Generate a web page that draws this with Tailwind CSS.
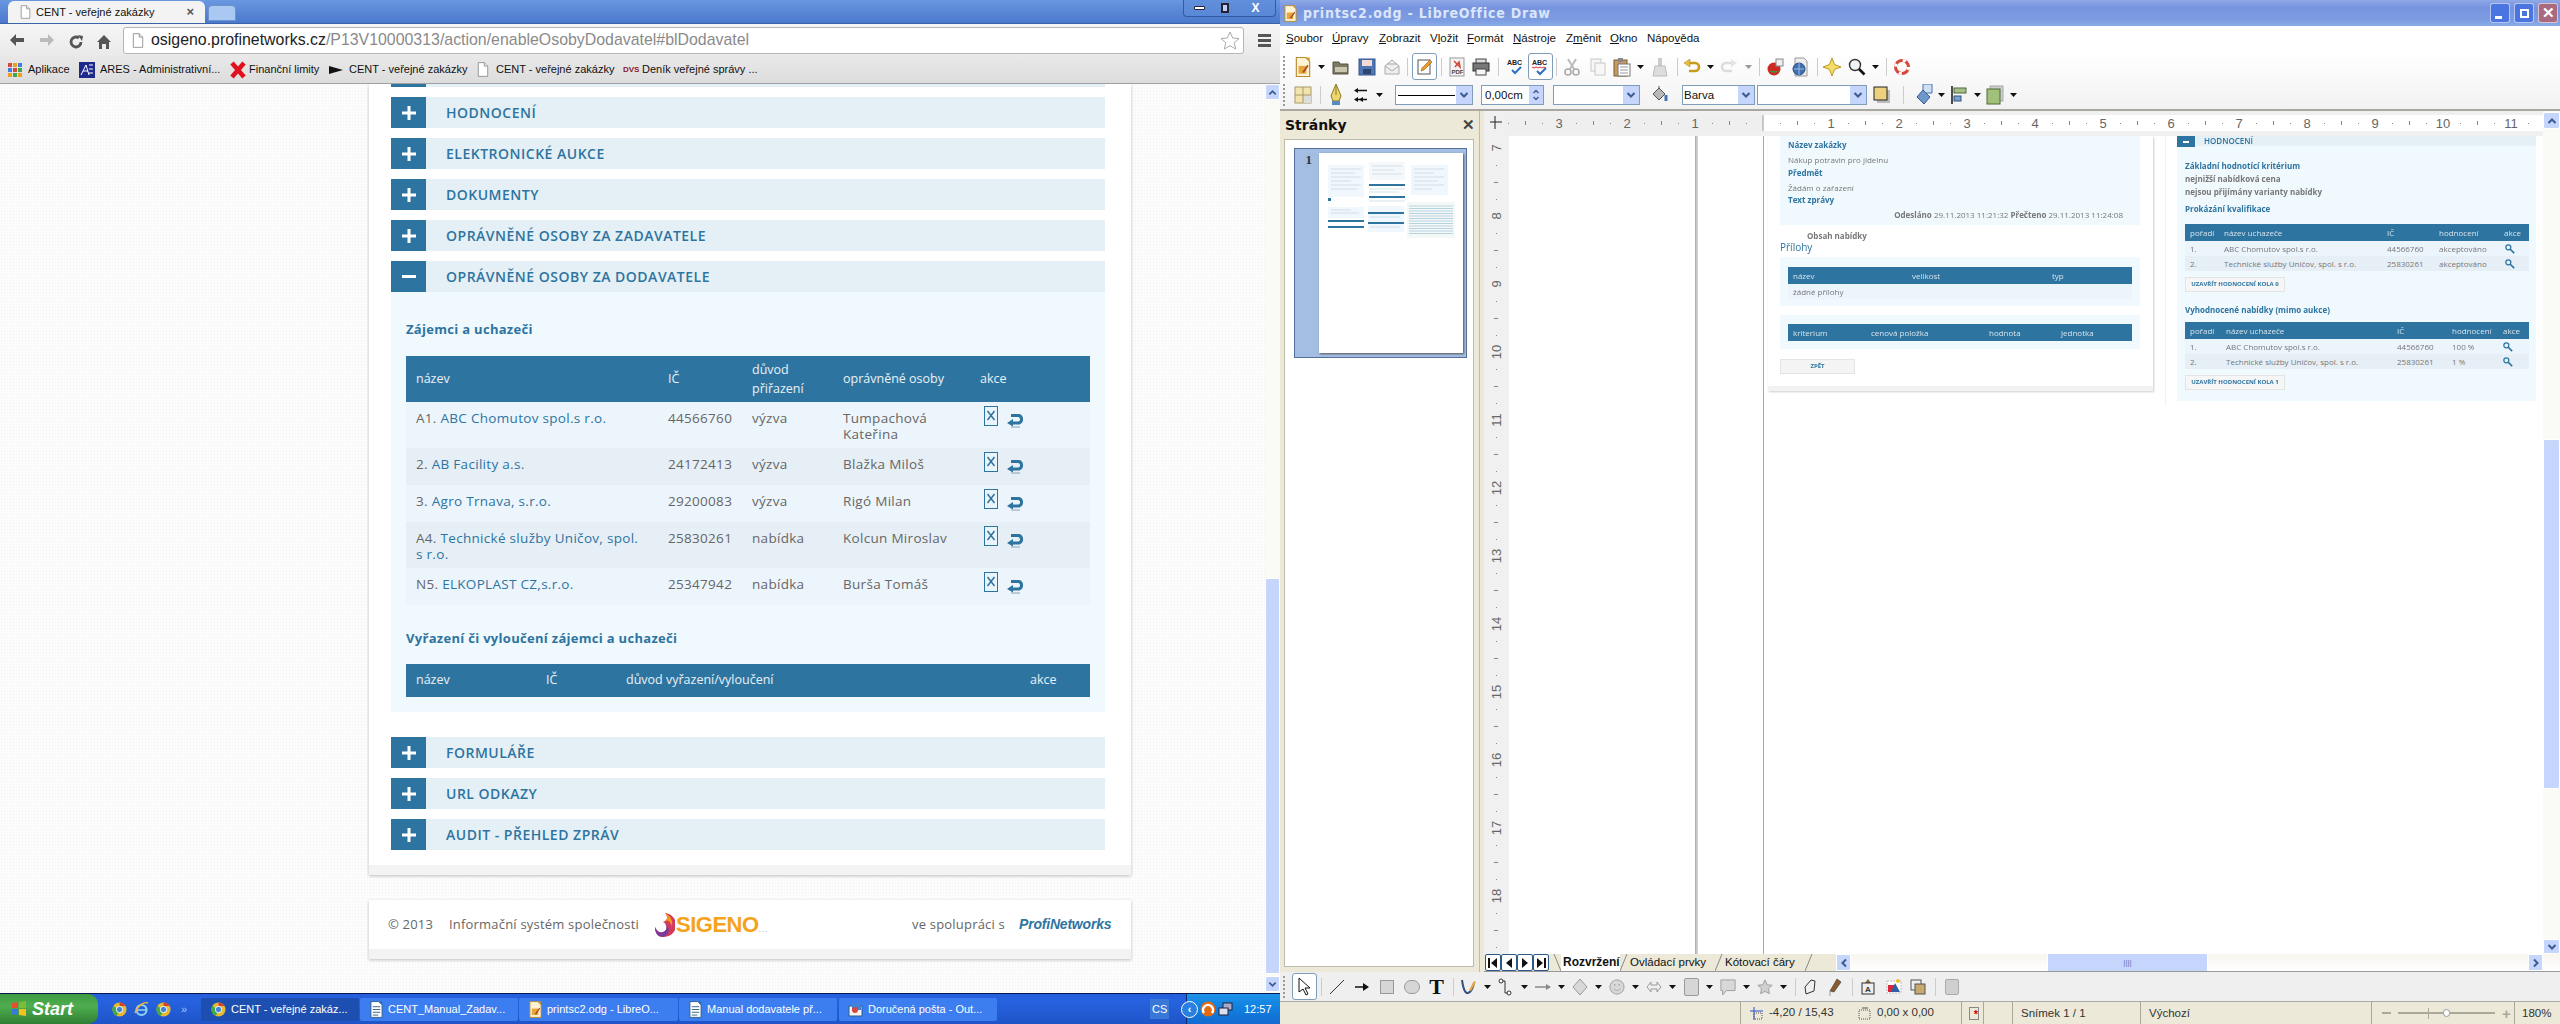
<!DOCTYPE html>
<html lang="cs">
<head>
  <meta charset="UTF-8" />
  <title>CENT - veřejné zakázky</title>
  <script src="https://cdn.jsdelivr.net/npm/@tailwindcss/browser@4"></script>
</head>
<body class="w-[2560px] h-[1024px] overflow-hidden flex font-['Liberation_Sans',sans-serif] text-[#111]">

  <!-- icon set -->
  <svg class="absolute w-0 h-0">
    <symbol id="plus" viewBox="0 0 14 14"><path d="M5.5 0h3v5.5H14v3H8.500V14h-3V8.500H0v-3h5.500z" fill="#fff"/></symbol>
    <symbol id="cross" viewBox="0 0 14 20"><rect x=".5" y=".5" width="13" height="19" fill="#eaf4fb" stroke="#2e74a0"/><path d="M3.500 5l7 9M10.500 5l-7 9" stroke="#2e74a0" stroke-width="1.500"/></symbol>
    <symbol id="back" viewBox="0 0 18 14"><path d="M5 1.500h8a4 4 0 0 1 0 7.500H6" fill="none" stroke="#2e74a0" stroke-width="3"/><path d="M7 5L1 9l6 3.500z" fill="#2e74a0"/><path d="M5 13h9" stroke="#a9bccb" stroke-width="1.500"/></symbol>
    <symbol id="doc" viewBox="0 0 14 17"><path d="M1.500.500h7l4 4v12h-11z" fill="#fff" stroke="#8a8a8a"/><path d="M8.500.500v4h4" fill="#eee" stroke="#8a8a8a"/></symbol>
    <symbol id="chrome" viewBox="0 0 16 16"><circle cx="8" cy="8" r="7.500" fill="#e8b92e"/><path d="M8 .5a7.500 7.500 0 0 1 6.500 3.750H8z" fill="#d9402c"/><path d="M1.500 4.250A7.500 7.500 0 0 0 5 15l3-6z" fill="#3da94a"/><circle cx="8" cy="8" r="3.400" fill="#3f82d8" stroke="#fff"/></symbol>
    <symbol id="ldoc" viewBox="0 0 14 18"><path d="M1 .5h8.500l3.500 3.500v13.500H1z" fill="#fff" stroke="#2d5f85"/><path d="M3 6h8M3 9h8M3 12h8M3 15h6" stroke="#2d5f85"/><path d="M9.500.5h3.500V4z" fill="#1d6fa8"/></symbol>
    <symbol id="lodraw" viewBox="0 0 14 18"><path d="M1 .5h8.500l3.500 3.500v13.500H1z" fill="#fff3d6" stroke="#b88a2a"/><path d="M3 8h7v7H3z" fill="#e5a63c"/><path d="M6 14l5-7 1 1-4 6z" fill="#b0441e"/><path d="M9.500.5h3.500V4z" fill="#d59a22"/></symbol>
    <symbol id="arrdown" viewBox="0 0 7 4"><path d="M0 0h7L3.500 4z" fill="#111"/></symbol>
    <symbol id="arrgray" viewBox="0 0 7 4"><path d="M0 0h7L3.500 4z" fill="#999"/></symbol>
    <symbol id="chev" viewBox="0 0 10 10"><path d="M1.500 3L5 6.500 8.500 3" fill="none" stroke="#3c5a93" stroke-width="2"/></symbol>
    <symbol id="open" viewBox="0 0 18 18"><path d="M1 4h6l1 2h8v10H1z" fill="#7d7a64" stroke="#55533f"/><path d="M3 9h12v5H3z" fill="#c9c6ae"/></symbol>
    <symbol id="save" viewBox="0 0 18 18"><rect x="1" y="1" width="16" height="16" fill="#4f77b5" stroke="#34578e"/><rect x="4" y="2" width="10" height="6" fill="#f4dbd6"/><rect x="5" y="11" width="8" height="5" fill="#2b4770"/></symbol>
    <symbol id="mail" viewBox="0 0 18 18"><path d="M2 8l7-6 7 6v8H2z" fill="#eee" stroke="#aaa"/><path d="M2 8l7 5 7-5M4 6h10" fill="none" stroke="#aaa"/></symbol>
    <symbol id="edit" viewBox="0 0 18 18"><rect x="2" y="2" width="12" height="14" fill="#fff" stroke="#555"/><path d="M5 13l1-3 8-8 2 2-8 8z" fill="#e89a2c" stroke="#a15b10" stroke-width=".6"/></symbol>
    <symbol id="print" viewBox="0 0 18 18"><rect x="4" y="1" width="10" height="5" fill="#ddd" stroke="#444"/><rect x="1" y="5" width="16" height="8" fill="#777" stroke="#333"/><rect x="4" y="11" width="10" height="6" fill="#f5f5f5" stroke="#444"/></symbol>
    <symbol id="cut" viewBox="0 0 18 18"><path d="M5 1l6 10M13 1L7 11" stroke="#bbb" stroke-width="2"/><circle cx="5" cy="14" r="3" fill="none" stroke="#aaa" stroke-width="1.600"/><circle cx="13" cy="14" r="3" fill="none" stroke="#aaa" stroke-width="1.600"/></symbol>
    <symbol id="copy" viewBox="0 0 18 18"><rect x="2" y="1" width="10" height="12" fill="#f7f7f7" stroke="#c8c8c8"/><rect x="6" y="5" width="10" height="12" fill="#f7f7f7" stroke="#c8c8c8"/></symbol>
    <symbol id="paste" viewBox="0 0 18 20"><rect x="1" y="3" width="13" height="16" fill="#c79a62" stroke="#7e5a2c"/><rect x="5" y="1" width="5" height="4" fill="#888"/><rect x="5" y="7" width="12" height="12" fill="#fff" stroke="#777"/><path d="M7 10h8M7 13h8M7 16h8" stroke="#999"/></symbol>
    <symbol id="brush" viewBox="0 0 18 20"><rect x="7" y="1" width="4" height="8" fill="#ccc"/><path d="M4 9h10l2 10H2z" fill="#ddd" stroke="#bbb"/></symbol>
    <symbol id="undo" viewBox="0 0 18 16"><path d="M6 4h6a4 4 0 0 1 0 8H6" fill="none" stroke="#c99a1b" stroke-width="2.600"/><path d="M7 0L1 4l6 4z" fill="#e7bf3a" stroke="#a77f10" stroke-width=".5"/></symbol>
    <symbol id="redo" viewBox="0 0 18 16"><path d="M12 4H6a4 4 0 0 0 0 8h6" fill="none" stroke="#ddd" stroke-width="2.600"/><path d="M11 0l6 4-6 4z" fill="#e4e4e4"/></symbol>
    <symbol id="gallery" viewBox="0 0 18 18"><circle cx="8" cy="11" r="6.500" fill="#cc2a22"/><path d="M3 13a6 4 0 0 0 10 0z" fill="#3c9a3c"/><rect x="10" y="1" width="7" height="7" fill="#eee" stroke="#888"/></symbol>
    <symbol id="nav" viewBox="0 0 18 20"><path d="M4 1h9l3 3v15H4z" fill="#eee" stroke="#999"/><circle cx="8" cy="12" r="6" fill="#3f6fae" stroke="#234a80"/><path d="M3 12h10M8 6v12" stroke="#9cc0e8"/></symbol>
    <symbol id="spark" viewBox="0 0 18 18"><path d="M9 0l2.500 6.500L18 9l-6.500 2.500L9 18l-2.500-6.500L0 9l6.500-2.500z" fill="#f5dd6a" stroke="#b79a25"/></symbol>
    <symbol id="lens" viewBox="0 0 18 18"><circle cx="7" cy="7" r="5.500" fill="#eef3f6" stroke="#333" stroke-width="1.400"/><path d="M11 11l5.500 5.500" stroke="#111" stroke-width="2.600"/></symbol>
    <symbol id="help" viewBox="0 0 18 18"><circle cx="9" cy="9" r="6.500" fill="none" stroke="#d9463a" stroke-width="3"/><circle cx="9" cy="9" r="6.500" fill="none" stroke="#fff" stroke-width="3" stroke-dasharray="3 7.200"/></symbol>
    <symbol id="grid4" viewBox="0 0 18 18"><rect x="1" y="1" width="16" height="16" fill="#f3e4ae" stroke="#a89868"/><rect x="9" y="9" width="8" height="8" fill="#ddd"/><path d="M9 1v16M1 9h16" stroke="#a89868"/></symbol>
    <symbol id="pen" viewBox="0 0 14 22"><path d="M7 0l5 12-2 5H4l-2-5z" fill="#ecd56c" stroke="#8c7a20"/><path d="M7 2v9" stroke="#8c7a20"/><rect x="3" y="17" width="8" height="4" fill="#5b8ac0"/></symbol>
    <symbol id="arrows" viewBox="0 0 14 16"><path d="M14 3.500H4M14 12.500H4" stroke="#111" stroke-width="1.400"/><path d="M5 1L1 3.500 5 6zM5 10l-4 2.500L5 15zM10 10l-4 2.500 4 2.500z" fill="#111"/></symbol>
    <symbol id="bucket" viewBox="0 0 18 20"><path d="M2 9l6-6 6 6-6 6z" fill="#b8b8b8" stroke="#555"/><path d="M8 3V1" stroke="#555"/><path d="M15 10v6" stroke="#4472b5" stroke-width="3"/></symbol>
    <symbol id="shadow" viewBox="0 0 18 18"><rect x="4" y="4" width="13" height="13" fill="#bbb"/><rect x="1" y="1" width="13" height="13" fill="#eed17e" stroke="#222"/></symbol>
    <symbol id="object" viewBox="0 0 18 22"><path d="M8 0h9v9h-9z" fill="#cfe0f5" stroke="#4472b5"/><path d="M8 6l7 7-6 7-7-7z" fill="#6e97cc" stroke="#345c93"/></symbol>
    <symbol id="align" viewBox="0 0 16 18"><path d="M1 0v18" stroke="#222" stroke-width="1.600"/><rect x="3" y="2" width="12" height="5" fill="#a7c08a" stroke="#4c6a34"/><rect x="3" y="10" width="7" height="5" fill="#7aa0cc" stroke="#2f557f"/></symbol>
    <symbol id="arrange" viewBox="0 0 18 20"><rect x="4" y="1" width="13" height="15" fill="#ccc" stroke="#aaa"/><rect x="1" y="4" width="13" height="15" fill="#a1c07a" stroke="#4c6a34"/></symbol>
    <symbol id="cursor" viewBox="0 0 14 20"><path d="M1 1v14l4-3 3 6 2-1-3-6h5z" fill="#fff" stroke="#111"/></symbol>
    <symbol id="smiley" viewBox="0 0 18 20"><circle cx="9" cy="10" r="8" fill="#d8d8d8" stroke="#9a9a9a"/><path d="M5 12q4 4 8 0" fill="none" stroke="#aaa"/><circle cx="6.500" cy="7.500" r="1" fill="#aaa"/><circle cx="11.500" cy="7.500" r="1" fill="#aaa"/></symbol>
    <symbol id="callout" viewBox="0 0 18 20"><path d="M1 2h16v12H7l-4 5v-5H1z" fill="#d8d8d8" stroke="#9a9a9a"/></symbol>
    <symbol id="star" viewBox="0 0 18 18"><path d="M9 1l2.500 5.500 5.500.5-4 4 1 5.500L9 14l-5 2.500 1-5.500-4-4 5.500-.5z" fill="#d0d0d0" stroke="#9a9a9a"/></symbol>
    <symbol id="mag" viewBox="0 0 12 12"><circle cx="4" cy="4" r="3" fill="none" stroke="#2e74a0" stroke-width="1.500"/><path d="M6 6l5 5" stroke="#2e74a0" stroke-width="2"/></symbol>
    <symbol id="tabcut" viewBox="0 0 8 17"><path d="M0 17L7 0" stroke="#888" fill="none"/></symbol>
  </svg>

  <!-- Chrome window -->
  <div class="w-[1280px] h-full flex flex-col">
    <!-- tabs -->
    <div class="h-[24px] flex items-end pl-[8px] relative bg-[linear-gradient(#6a97e0,#4a78cc)] border-b border-[#3a63a8]">
      <div class="w-[197px] h-[22px] bg-[#f3f3f3] rounded-t-[6px] flex items-center pl-[12px] text-[11px] gap-[5px] whitespace-nowrap">
        <svg class="w-[11px] h-[14px]"><use href="#doc"/></svg>
        <span class="flex-1">CENT - veřejné zakázky</span>
        <span class="pr-[11px] font-bold text-[13px] text-[#555]">×</span>
      </div>
      <div class="w-[28px] h-[16px] ml-[3px] mb-[2px] bg-[#a9c8f2] rounded-t-[4px] border border-[#6f93cc]"></div>
      <div class="absolute right-[4px] top-0 w-[93px] h-[17px] flex border border-t-0 border-[#2f5ca8] rounded-b-[4px] bg-[#5d8ad8]/60">
        <div class="w-[30px] flex items-center justify-center"><div class="w-[11px] h-[4px] border border-[#223] bg-white rounded-[1px]"></div></div>
        <div class="w-[22px] flex items-center justify-center"><div class="w-[8px] h-[10px] border-[2px] border-[#223] bg-white/60"></div></div>
        <div class="flex-1 flex items-center justify-center text-[12px] font-bold text-white">X</div>
      </div>
    </div>
    <!-- address bar -->
    <div class="h-[32px] flex items-center bg-[linear-gradient(#f6f6f6,#e9e9e9)] text-[#555]">
      <div class="w-[123px] flex items-center pl-[9px] gap-[14px]">
        <svg class="w-[16px] h-[14px]" viewBox="0 0 16 14"><path d="M7 1L1 7l6 6V9h8V5H7z" fill="#555"/></svg>
        <svg class="w-[16px] h-[14px]" viewBox="0 0 16 14"><path d="M9 1l6 6-6 6V9H1V5h8z" fill="#bbb"/></svg>
      </div>
      <div class="absolute left-[68px] top-[34px] flex gap-[12px]">
        <svg class="w-[16px] h-[16px]" viewBox="0 0 16 16"><path d="M13 8a5 5 0 1 1-2-4" fill="none" stroke="#555" stroke-width="2.800"/><path d="M10 1l5 1-1 5z" fill="#555"/></svg>
        <svg class="w-[16px] h-[16px]" viewBox="0 0 16 16"><path d="M8 1l7 7h-2v7h-3v-5H6v5H3V8H1z" fill="#555"/></svg>
      </div>
      <div class="w-[1121px] h-[27px] bg-white border border-[#b5b5b5] rounded-[3px] flex items-center pl-[8px] text-[15.9px] text-[#8a8a8a] relative">
        <svg class="w-[12px] h-[15px] mr-[7px]"><use href="#doc"/></svg>
        <span class="text-[#222]">osigeno.profinetworks.cz</span><span>/P13V10000313/action/enableOsobyDodavatel#blDodavatel</span>
        <svg class="absolute right-[3px] top-[3px] w-[20px] h-[20px]" viewBox="0 0 20 20"><path d="M10 1l2.700 6 6.300.6-4.800 4.200 1.500 6.200L10 14.700 4.300 18l1.500-6.200L1 7.600 7.300 7z" fill="#fff" stroke="#aaa"/></svg>
      </div>
      <div class="w-[36px] flex flex-col items-center gap-[2px] pl-[4px]">
        <div class="w-[13px] h-[3px] bg-[#555]"></div><div class="w-[13px] h-[3px] bg-[#555]"></div><div class="w-[13px] h-[3px] bg-[#555]"></div>
      </div>
    </div>
    <!-- bookmarks -->
    <div class="h-[28px] flex items-center bg-[linear-gradient(#e9e9e9,#dcdcdc)] border-b border-[#a0a0a0] text-[11px] pl-[8px] whitespace-nowrap">
      <div class="w-[14px] h-[14px] grid grid-cols-3 gap-[1px] mr-[6px]">
        <i class="bg-[#d9463a]"></i><i class="bg-[#e8a020]"></i><i class="bg-[#3f7fe0]"></i><i class="bg-[#3f7fe0]"></i><i class="bg-[#d9463a]"></i><i class="bg-[#3da94a]"></i><i class="bg-[#e8a020]"></i><i class="bg-[#3da94a]"></i><i class="bg-[#e8a020]"></i>
      </div>
      <span class="w-[51px]">Aplikace</span>
      <svg class="w-[16px] h-[16px] mr-[5px]" viewBox="0 0 16 16"><rect width="16" height="16" fill="#1d2a8c"/><path d="M2 13L7 3l3 10M4 9h5M10 3h4M10 7h4M10 11h4" fill="none" stroke="#fff"/></svg>
      <span class="w-[130px]">ARES - Administrativní...</span>
      <svg class="w-[16px] h-[18px] mr-[3px]" viewBox="0 0 16 18"><path d="M2 2l12 14M14 2L2 16" stroke="#e0101c" stroke-width="4.500"/></svg>
      <span class="w-[66px] mr-[14px]">Finanční limity</span>
      <svg class="w-[14px] h-[8px] mr-[6px]" viewBox="0 0 14 8"><path d="M0 0l14 4-14 4z" fill="#111"/></svg>
      <span class="w-[128px]">CENT - veřejné zakázky</span>
      <svg class="w-[12px] h-[15px] mr-[7px]"><use href="#doc"/></svg>
      <span class="w-[127px]">CENT - veřejné zakázky</span>
      <span class="text-[8px] font-bold text-[#8b1a2a] w-[19px]">DVS</span>
      <span>Deník veřejné správy ...</span>
    </div>

    <!-- page -->
    <div class="h-[909px] flex bg-[#fcfcfc] bg-[radial-gradient(#f1f1f1_1px,transparent_1px)] bg-[length:3px_3px] overflow-hidden font-['Open_Sans',sans-serif]">
      <div class="w-[1265px] pl-[369px]">
        <div class="w-[762px] bg-white shadow-[0_1px_3px_rgba(0,0,0,0.25)]">
          <div class="ml-[22px] w-[714px] flex flex-col">
            <div class="h-[3px] bg-[#e5f0f6] border-l-[35px] border-[#2e74a0]"></div>
            <div class="mt-[10px] h-[31px] bg-[#e5f0f6] flex items-center text-[14px] font-semibold text-[#2e74a0] tracking-[0.5px]"><span class="w-[35px] h-full bg-[#2e74a0] flex items-center justify-center"><svg class="w-[14px] h-[14px]"><use href="#plus"/></svg></span><span class="pl-[20px]">HODNOCENÍ</span></div>
            <div class="mt-[10px] h-[31px] bg-[#e5f0f6] flex items-center text-[14px] font-semibold text-[#2e74a0] tracking-[0.5px]"><span class="w-[35px] h-full bg-[#2e74a0] flex items-center justify-center"><svg class="w-[14px] h-[14px]"><use href="#plus"/></svg></span><span class="pl-[20px]">ELEKTRONICKÉ AUKCE</span></div>
            <div class="mt-[10px] h-[31px] bg-[#e5f0f6] flex items-center text-[14px] font-semibold text-[#2e74a0] tracking-[0.5px]"><span class="w-[35px] h-full bg-[#2e74a0] flex items-center justify-center"><svg class="w-[14px] h-[14px]"><use href="#plus"/></svg></span><span class="pl-[20px]">DOKUMENTY</span></div>
            <div class="mt-[10px] h-[31px] bg-[#e5f0f6] flex items-center text-[14px] font-semibold text-[#2e74a0] tracking-[0.5px]"><span class="w-[35px] h-full bg-[#2e74a0] flex items-center justify-center"><svg class="w-[14px] h-[14px]"><use href="#plus"/></svg></span><span class="pl-[20px]">OPRÁVNĚNÉ OSOBY ZA ZADAVATELE</span></div>
            <div class="mt-[10px] h-[31px] bg-[#e5f0f6] flex items-center text-[14px] font-semibold text-[#2e74a0] tracking-[0.5px]"><span class="w-[35px] h-full bg-[#2e74a0] flex items-center justify-center"><span class="w-[14px] h-[3px] bg-white"></span></span><span class="pl-[20px]">OPRÁVNĚNÉ OSOBY ZA DODAVATELE</span></div>

            <!-- open panel -->
            <div class="h-[420px] bg-[#f0f9fe] px-[15px] text-[13.5px] text-[#666] tracking-[0.3px]">
              <h3 class="h-[64px] pt-[27px] text-[13px] leading-[20px] font-bold text-[#2e74a0]">Zájemci a uchazeči</h3>
              <div class="w-[684px] grid grid-cols-[252px_84px_91px_137px_120px] leading-[16px]">
                <div class="bg-[#2e74a0] text-white/90 text-[12.5px] tracking-normal h-[46px] col-span-5 grid grid-cols-subgrid items-center">
                  <span class="pl-[10px]">název</span><span class="pl-[10px]">IČ</span><span class="pl-[10px] leading-[19px]">důvod přiřazení</span><span class="pl-[10px]">oprávněné osoby</span><span class="pl-[10px]">akce</span>
                </div>
                <div class="col-span-5 grid grid-cols-subgrid h-[46px] bg-[#edf5fc] pt-[8px]"><span class="pl-[10px]">A1. <a class="text-[#2e74a0]">ABC Chomutov spol.s r.o.</a></span><span class="pl-[10px]">44566760</span><span class="pl-[10px]">výzva</span><span class="pl-[10px]">Tumpachová Kateřina</span><span class="pl-[14px] flex gap-[8px]"><svg class="w-[14px] h-[20px] -mt-[4px]"><use href="#cross"/></svg><svg class="w-[18px] h-[14px] mt-[4px]"><use href="#back"/></svg></span></div>
                <div class="col-span-5 grid grid-cols-subgrid h-[37px] bg-[#e6eff6] pt-[8px]"><span class="pl-[10px]">2. <a class="text-[#2e74a0]">AB Facility a.s.</a></span><span class="pl-[10px]">24172413</span><span class="pl-[10px]">výzva</span><span class="pl-[10px]">Blažka Miloš</span><span class="pl-[14px] flex gap-[8px]"><svg class="w-[14px] h-[20px] -mt-[4px]"><use href="#cross"/></svg><svg class="w-[18px] h-[14px] mt-[4px]"><use href="#back"/></svg></span></div>
                <div class="col-span-5 grid grid-cols-subgrid h-[37px] bg-[#edf5fc] pt-[8px]"><span class="pl-[10px]">3. <a class="text-[#2e74a0]">Agro Trnava, s.r.o.</a></span><span class="pl-[10px]">29200083</span><span class="pl-[10px]">výzva</span><span class="pl-[10px]">Rigó Milan</span><span class="pl-[14px] flex gap-[8px]"><svg class="w-[14px] h-[20px] -mt-[4px]"><use href="#cross"/></svg><svg class="w-[18px] h-[14px] mt-[4px]"><use href="#back"/></svg></span></div>
                <div class="col-span-5 grid grid-cols-subgrid h-[46px] bg-[#e6eff6] pt-[8px]"><span class="pl-[10px]">A4. <a class="text-[#2e74a0]">Technické služby Uničov, spol. <br/>s r.o.</a></span><span class="pl-[10px]">25830261</span><span class="pl-[10px]">nabídka</span><span class="pl-[10px]">Kolcun Miroslav</span><span class="pl-[14px] flex gap-[8px]"><svg class="w-[14px] h-[20px] -mt-[4px]"><use href="#cross"/></svg><svg class="w-[18px] h-[14px] mt-[4px]"><use href="#back"/></svg></span></div>
                <div class="col-span-5 grid grid-cols-subgrid h-[37px] bg-[#edf5fc] pt-[8px]"><span class="pl-[10px]">N5. <a class="text-[#2e74a0]">ELKOPLAST CZ,s.r.o.</a></span><span class="pl-[10px]">25347942</span><span class="pl-[10px]">nabídka</span><span class="pl-[10px]">Burša Tomáš</span><span class="pl-[14px] flex gap-[8px]"><svg class="w-[14px] h-[20px] -mt-[4px]"><use href="#cross"/></svg><svg class="w-[18px] h-[14px] mt-[4px]"><use href="#back"/></svg></span></div>
              </div>
              <h3 class="h-[59px] pt-[23px] text-[13px] leading-[20px] font-bold text-[#2e74a0]">Vyřazení či vyloučení zájemci a uchazeči</h3>
              <div class="w-[684px] h-[33px] bg-[#2e74a0] text-white/90 text-[12.5px] tracking-normal grid grid-cols-[130px_80px_404px_70px] items-center">
                <span class="pl-[10px]">název</span><span class="pl-[10px]">IČ</span><span class="pl-[10px]">důvod vyřazení/vyloučení</span><span class="pl-[10px]">akce</span>
              </div>
            </div>

            <div class="mt-[25px] h-[31px] bg-[#e5f0f6] flex items-center text-[14px] font-semibold text-[#2e74a0] tracking-[0.5px]"><span class="w-[35px] h-full bg-[#2e74a0] flex items-center justify-center"><svg class="w-[14px] h-[14px]"><use href="#plus"/></svg></span><span class="pl-[20px]">FORMULÁŘE</span></div>
            <div class="mt-[10px] h-[31px] bg-[#e5f0f6] flex items-center text-[14px] font-semibold text-[#2e74a0] tracking-[0.5px]"><span class="w-[35px] h-full bg-[#2e74a0] flex items-center justify-center"><svg class="w-[14px] h-[14px]"><use href="#plus"/></svg></span><span class="pl-[20px]">URL ODKAZY</span></div>
            <div class="mt-[10px] h-[31px] bg-[#e5f0f6] flex items-center text-[14px] font-semibold text-[#2e74a0] tracking-[0.5px]"><span class="w-[35px] h-full bg-[#2e74a0] flex items-center justify-center"><svg class="w-[14px] h-[14px]"><use href="#plus"/></svg></span><span class="pl-[20px]">AUDIT - PŘEHLED ZPRÁV</span></div>
          </div>
          <div class="mt-[15px] h-[10px] bg-[#f3f3f3]"></div>
        </div>
        <!-- footer -->
        <div class="mt-[25px] w-[762px] bg-white shadow-[0_1px_3px_rgba(0,0,0,0.25)]">
          <div class="h-[49px] flex items-center pl-[19px] pr-[19px] text-[13px] text-[#666] tracking-[0.2px]">
            <span class="w-[61px]">© 2013</span>
            <span class="w-[205px]">Informační systém společnosti</span>
            <svg class="w-[21px] h-[26px]" viewBox="0 0 21 26"><path d="M11 1a12 12 0 0 1-2 24C3 25 1 20 1 15c2 5 6 7 10 4 3-3 2-7-2-9 5-1 5-6 2-9z" fill="#d33a5e"/><path d="M1 15c2 5 6 7 10 4 2-2 2-5 0-7 5 3 5 9 0 12-4 2-10 0-10-9z" fill="#7a3c9a"/><path d="M11 1c6 3 8 8 7 13-2-5-5-7-9-4 5-1 5-6 2-9z" fill="#f09a1c"/></svg>
            <span class="text-[22px] font-bold text-[#f5a21c] tracking-[-0.5px] ml-[1px] w-[104px] font-['Liberation_Sans',sans-serif]">SIGENO<span class="text-[8px] text-[#ccc] tracking-[1px]">...</span></span>
            <span class="flex-1 text-right pr-[14px]">ve spolupráci s</span>
            <span class="text-[14px] font-bold italic text-[#2e74a0] tracking-[-0.2px] w-[93px] whitespace-nowrap font-['Liberation_Sans',sans-serif]">ProfiNetworks</span>
          </div>
          <div class="h-[10px] bg-[#f3f3f3]"></div>
        </div>
      </div>
      <!-- scrollbar -->
      <div class="w-[15px] bg-[#fafaf6] flex flex-col">
        <div class="h-[16px] bg-[#c5d5fb] border border-white rounded-[2px] flex items-center justify-center"><svg class="w-[9px] h-[9px] rotate-180"><use href="#chev"/></svg></div>
        <div class="h-[478px]"></div>
        <div class="h-[396px] bg-[#c5d5fb] border border-white rounded-[2px]"></div>
        <div class="h-[16px] mt-[2px] bg-[#c5d5fb] border border-white rounded-[2px] flex items-center justify-center"><svg class="w-[9px] h-[9px]"><use href="#chev"/></svg></div>
      </div>
    </div>

    <!-- taskbar -->
    <div class="h-[31px] flex items-center bg-[linear-gradient(#245edb,#2663e0_20%,#1f54c8)] border-t border-[#0a1a50] text-white text-[11px] whitespace-nowrap">
      <div class="w-[98px] h-full bg-[linear-gradient(#3f9a42,#4fae4f_40%,#2f7f33)] rounded-r-[10px] flex items-center pl-[11px] gap-[5px] italic font-bold text-[18px]">
        <svg class="w-[16px] h-[16px] shrink-0" viewBox="0 0 16 16"><path d="M1 2l6-1v6H1z" fill="#e2502a"/><path d="M8 1l7-1v7H8z" fill="#7dbb3a"/><path d="M1 8h6v6l-6-1z" fill="#3c78d8"/><path d="M8 8h7v7l-7-1z" fill="#f2c31f"/></svg>
        <span class="font-['Liberation_Sans',sans-serif]">Start</span>
      </div>
      <div class="w-[103px] flex items-center pl-[14px] gap-[7px]">
        <svg class="w-[15px] h-[15px]"><use href="#chrome"/></svg>
        <svg class="w-[15px] h-[17px]" viewBox="0 0 15 17"><circle cx="7.500" cy="9" r="5" fill="none" stroke="#8fd0f5" stroke-width="2.200"/><path d="M3 9h9" stroke="#8fd0f5" stroke-width="1.600"/><path d="M1 12C5 2 12 1 14 2" fill="none" stroke="#f2b431" stroke-width="1.400"/></svg>
        <svg class="w-[15px] h-[15px]"><use href="#chrome"/></svg>
        <span class="text-[#a8c4f0] text-[11px] pl-[3px]">»</span>
      </div>
      <div class="w-[158px] h-[23px] bg-[#1d4fb0] rounded-[2px] flex items-center pl-[10px] gap-[5px]"><svg class="w-[15px] h-[15px]"><use href="#chrome"/></svg>CENT - veřejné zakáz...</div>
      <div class="w-[158px] h-[23px] ml-[1px] bg-[#3c7df0] rounded-[2px] flex items-center pl-[10px] gap-[5px]"><svg class="w-[13px] h-[17px]"><use href="#ldoc"/></svg>CENT_Manual_Zadav...</div>
      <div class="w-[159px] h-[23px] ml-[1px] bg-[#3c7df0] rounded-[2px] flex items-center pl-[10px] gap-[5px]"><svg class="w-[13px] h-[17px]"><use href="#lodraw"/></svg>printsc2.odg - LibreO...</div>
      <div class="w-[158px] h-[23px] ml-[1px] bg-[#3c7df0] rounded-[2px] flex items-center pl-[10px] gap-[5px]"><svg class="w-[13px] h-[17px]"><use href="#ldoc"/></svg>Manual dodavatele př...</div>
      <div class="w-[158px] h-[23px] ml-[2px] bg-[#3c7df0] rounded-[2px] flex items-center pl-[9px] gap-[5px]"><svg class="w-[15px] h-[17px]" viewBox="0 0 15 17"><path d="M1 5h13v10H1z" fill="#f3f3f3" stroke="#2d5f85"/><path d="M4 2h9v7H4z" fill="#3f82d8"/><circle cx="7" cy="9" r="3" fill="#d9463a"/></svg>Doručená pošta - Out...</div>
      <div class="w-[189px] flex items-center h-full">
        <span class="ml-[153px] bg-[#3a78d8] px-[2px] h-[20px] flex items-center text-[11px]">CS</span>
      </div>
      <div class="flex-1 h-full bg-[linear-gradient(#1d93e8,#0f7fe0_50%,#1569d0)] border-l border-[#0a2a70] flex items-center relative pl-[12px] gap-[2px]">
        <span class="absolute -left-[6px] top-[7px] w-[17px] h-[17px] rounded-full bg-[#2a80e0] border border-white flex items-center justify-center text-[11px] font-bold">‹</span>
        <svg class="w-[16px] h-[16px] ml-[1px]" viewBox="0 0 16 16"><circle cx="8" cy="8" r="7.500" fill="#e36a10"/><path d="M4 12a5 5 0 1 1 8 0" fill="none" stroke="#fff" stroke-width="2.500"/></svg>
        <svg class="w-[15px] h-[15px]" viewBox="0 0 15 15"><rect x="5" y="1" width="9" height="7" fill="#aac" stroke="#223"/><rect x="1" y="6" width="9" height="7" fill="#dde" stroke="#223"/></svg>
        <span class="ml-[9px]">12:57</span>
      </div>
    </div>
  </div>

  <!-- LibreOffice Draw window -->
  <div class="w-[1280px] h-full flex flex-col text-[11px]">
    <div class="h-[26px] bg-[linear-gradient(#8fa9e6,#7793df_30%,#7e9ee2_80%,#88ace8)] flex items-center pl-[4px] gap-[6px] relative">
      <svg class="w-[13px] h-[17px]"><use href="#lodraw"/></svg>
      <span class="text-[14px] font-bold tracking-[0.8px] text-[#dbe6fa] font-['DejaVu_Sans_Condensed','DejaVu_Sans',sans-serif]">printsc2.odg - LibreOffice Draw</span>
      <div class="absolute right-[2px] top-[3px] flex gap-[4px]">
        <div class="w-[20px] h-[20px] rounded-[3px] bg-[#4a74e0] border border-white/60 flex items-end pl-[4px] pb-[3px]"><div class="w-[7px] h-[3px] bg-white"></div></div>
        <div class="w-[20px] h-[20px] rounded-[3px] bg-[#4a74e0] border border-white/60 flex items-center justify-center"><div class="w-[9px] h-[9px] border-[2px] border-white"></div></div>
        <div class="w-[20px] h-[20px] rounded-[3px] bg-[#a86a80] border border-white/60 flex items-center justify-center text-white font-bold text-[15px]">✕</div>
      </div>
    </div>
    <!-- menu -->
    <div class="h-[26px] bg-white flex items-center pl-[6px] text-[11.5px] text-[#111]">
      <span class="w-[46px]"><u>S</u>oubor</span><span class="w-[47px]"><u>Ú</u>pravy</span><span class="w-[51px]"><u>Z</u>obrazit</span><span class="w-[37px]">V<u>l</u>ožit</span><span class="w-[46px]"><u>F</u>ormát</span><span class="w-[53px]"><u>N</u>ástroje</span><span class="w-[44px]">Z<u>m</u>ěnit</span><span class="w-[37px]"><u>O</u>kno</span><span>Nápo<u>v</u>ěda</span>
    </div>
    <!-- toolbars -->
    <div class="h-[59px] flex flex-col bg-[linear-gradient(#fff,#f2f2f2)] border-b-2 border-[#a8a8a0]">
      <div class="h-[30px] flex items-center">
        <i class="ml-[3px] w-[4px] h-[22px] border-l-2 border-dotted border-[#999]"></i>
        <span class="ml-[5px] w-[22px] flex justify-center"><svg class="w-[16px] h-[20px]"><use href="#lodraw"/></svg></span>
        <span class="w-[14px] flex justify-center"><svg class="w-[7px] h-[4px]"><use href="#arrdown"/></svg></span>
        <span class="w-[26px] flex justify-center"><svg class="w-[18px] h-[18px]"><use href="#open"/></svg></span>
        <span class="w-[25px] flex justify-center"><svg class="w-[18px] h-[18px]"><use href="#save"/></svg></span>
        <span class="w-[25px] flex justify-center"><svg class="w-[18px] h-[18px]"><use href="#mail"/></svg></span>
        <span class="w-[6px] flex justify-center"><i class="w-px h-[18px] bg-[#ccc]"></i></span>
        <span class="ml-[2px] w-[25px] h-[27px] border border-[#7f9db9] rounded-[3px] flex items-center justify-center bg-white"><svg class="w-[18px] h-[18px]"><use href="#edit"/></svg></span>
        <span class="w-[8px] flex justify-center"><i class="w-px h-[18px] bg-[#ccc]"></i></span>
        <span class="w-[23px] flex justify-center"><svg class="w-[18px] h-[20px]" viewBox="0 0 18 20"><rect x="2" y="1" width="14" height="18" fill="#f4f4f4" stroke="#999"/><path d="M6 4l6 6-1-5-4 5" fill="none" stroke="#d24a3c" stroke-width="1.500"/><text x="3.500" y="17" font-size="6" font-weight="700" fill="#444" font-family="Liberation Sans">PDF</text></svg></span>
        <span class="w-[25px] flex justify-center"><svg class="w-[18px] h-[18px]"><use href="#print"/></svg></span>
        <span class="w-[10px] flex justify-center"><i class="w-px h-[18px] bg-[#ccc]"></i></span>
        <span class="w-[25px] flex justify-center"><svg class="w-[18px] h-[18px]" viewBox="0 0 18 18"><text x="0" y="7" font-size="7" font-weight="700" fill="#222" font-family="Liberation Sans">ABC</text><path d="M5 12l3 3 6-6" fill="none" stroke="#2d6fc0" stroke-width="2"/></svg></span>
        <span class="w-[25px] h-[27px] border border-[#7f9db9] rounded-[3px] flex items-center justify-center bg-white"><svg class="w-[18px] h-[18px]" viewBox="0 0 18 18"><text x="0" y="7" font-size="7" font-weight="700" fill="#222" font-family="Liberation Sans">ABC</text><path d="M0 9l2 1 2-1 2 1 2-1 2 1 2-1 2 1" fill="none" stroke="#d33"/><path d="M5 13l3 3 6-6" fill="none" stroke="#2d6fc0" stroke-width="2"/></svg></span>
        <span class="w-[6px] flex justify-center"><i class="w-px h-[18px] bg-[#ccc]"></i></span>
        <span class="w-[26px] flex justify-center"><svg class="w-[18px] h-[18px]"><use href="#cut"/></svg></span>
        <span class="w-[25px] flex justify-center"><svg class="w-[18px] h-[18px]"><use href="#copy"/></svg></span>
        <span class="w-[24px] flex justify-center"><svg class="w-[18px] h-[20px]"><use href="#paste"/></svg></span>
        <span class="w-[12px] flex justify-center"><svg class="w-[7px] h-[4px]"><use href="#arrdown"/></svg></span>
        <span class="w-[28px] flex justify-center"><svg class="w-[18px] h-[20px]"><use href="#brush"/></svg></span>
        <span class="w-[6px] flex justify-center"><i class="w-px h-[18px] bg-[#ccc]"></i></span>
        <span class="w-[24px] flex justify-center"><svg class="w-[18px] h-[16px]"><use href="#undo"/></svg></span>
        <span class="w-[12px] flex justify-center"><svg class="w-[7px] h-[4px]"><use href="#arrdown"/></svg></span>
        <span class="w-[26px] flex justify-center"><svg class="w-[18px] h-[16px]"><use href="#redo"/></svg></span>
        <span class="w-[12px] flex justify-center"><svg class="w-[7px] h-[4px]"><use href="#arrgray"/></svg></span>
        <span class="w-[10px] flex justify-center"><i class="w-px h-[18px] bg-[#ccc]"></i></span>
        <span class="w-[22px] flex justify-center"><svg class="w-[18px] h-[18px]"><use href="#gallery"/></svg></span>
        <span class="w-[28px] flex justify-center"><svg class="w-[18px] h-[20px]"><use href="#nav"/></svg></span>
        <span class="w-[6px] flex justify-center"><i class="w-px h-[18px] bg-[#ccc]"></i></span>
        <span class="w-[24px] flex justify-center"><svg class="w-[18px] h-[18px]"><use href="#spark"/></svg></span>
        <span class="w-[26px] flex justify-center"><svg class="w-[18px] h-[18px]"><use href="#lens"/></svg></span>
        <span class="w-[10px] flex justify-center"><svg class="w-[7px] h-[4px]"><use href="#arrdown"/></svg></span>
        <span class="w-[12px] flex justify-center"><i class="w-px h-[18px] bg-[#ccc]"></i></span>
        <span class="w-[20px] flex justify-center"><svg class="w-[18px] h-[18px]"><use href="#help"/></svg></span>
      </div>
      <div class="h-[28px] flex items-center text-[11.5px]">
        <i class="ml-[3px] w-[4px] h-[22px] border-l-2 border-dotted border-[#999]"></i>
        <span class="ml-[5px] w-[22px] flex justify-center"><svg class="w-[18px] h-[18px]"><use href="#grid4"/></svg></span>
        <span class="w-[12px] flex justify-center"><i class="w-px h-[18px] bg-[#ccc]"></i></span>
        <span class="w-[20px] flex justify-center"><svg class="w-[14px] h-[22px]"><use href="#pen"/></svg></span>
        <span class="w-[28px] flex justify-center"><svg class="w-[14px] h-[16px]"><use href="#arrows"/></svg></span>
        <span class="w-[10px] flex justify-center"><svg class="w-[7px] h-[4px]"><use href="#arrdown"/></svg></span>
        <div class="ml-[11px] w-[78px] h-[20px] bg-white border border-[#7f9db9] flex items-center pl-[2px]"><i class="flex-1 h-[1px] bg-black"></i><span class="ml-[1px] w-[16px] h-[18px] bg-[#c5d5fb] flex items-center justify-center"><svg class="w-[10px] h-[10px]"><use href="#chev"/></svg></span></div>
        <div class="ml-[8px] w-[63px] h-[20px] bg-white border border-[#7f9db9] flex items-center pl-[3px] justify-between">0,00cm<span class="w-[14px] h-[18px] bg-[#c5d5fb] flex flex-col items-center justify-center"><svg class="w-[8px] h-[7px] rotate-180"><use href="#chev"/></svg><svg class="w-[8px] h-[7px]"><use href="#chev"/></svg></span></div>
        <div class="ml-[9px] w-[87px] h-[20px] bg-white border border-[#7f9db9] flex items-center justify-end"><span class="w-[16px] h-[18px] bg-[#c5d5fb] flex items-center justify-center"><svg class="w-[10px] h-[10px]"><use href="#chev"/></svg></span></div>
        <span class="ml-[9px] w-[22px] flex justify-center"><svg class="w-[18px] h-[20px]"><use href="#bucket"/></svg></span>
        <div class="ml-[11px] w-[73px] h-[20px] bg-white border border-[#7f9db9] flex items-center pl-[1px] justify-between">Barva<span class="w-[16px] h-[18px] bg-[#c5d5fb] flex items-center justify-center"><svg class="w-[10px] h-[10px]"><use href="#chev"/></svg></span></div>
        <div class="ml-[2px] w-[110px] h-[20px] bg-white border border-[#7f9db9] flex items-center justify-end"><span class="w-[16px] h-[18px] bg-[#c5d5fb] flex items-center justify-center"><svg class="w-[10px] h-[10px]"><use href="#chev"/></svg></span></div>
        <span class="ml-[3px] w-[24px] flex justify-center"><svg class="w-[18px] h-[18px]"><use href="#shadow"/></svg></span>
        <span class="w-[18px] flex justify-center"><i class="w-px h-[18px] bg-[#ccc]"></i></span>
        <span class="w-[24px] flex justify-center"><svg class="w-[18px] h-[22px]"><use href="#object"/></svg></span>
        <span class="w-[10px] flex justify-center"><svg class="w-[7px] h-[4px]"><use href="#arrdown"/></svg></span>
        <span class="w-[26px] flex justify-center"><svg class="w-[16px] h-[18px]"><use href="#align"/></svg></span>
        <span class="w-[10px] flex justify-center"><svg class="w-[7px] h-[4px]"><use href="#arrdown"/></svg></span>
        <span class="w-[26px] flex justify-center"><svg class="w-[18px] h-[20px]"><use href="#arrange"/></svg></span>
        <span class="w-[10px] flex justify-center"><svg class="w-[7px] h-[4px]"><use href="#arrdown"/></svg></span>
      </div>
    </div>

    <!-- main -->
    <div class="h-[861px] flex bg-[#ece9d8]">
      <!-- pages panel -->
      <div class="w-[195px] ml-[4px] flex flex-col pb-[5px]">
        <div class="h-[28px] flex items-center justify-between pl-[1px] pr-[4px]">
          <b class="text-[14px] font-['DejaVu_Sans',sans-serif]">Stránky</b><b class="text-[15px] text-[#444]">✕</b>
        </div>
        <div class="flex-1 w-[190px] bg-white border border-[#bdbcab] pt-[8px] pl-[9px]">
          <div class="w-[173px] h-[210px] bg-[#a3bde3] border border-[#54709c] flex">
            <b class="w-[24px] pt-[1px] text-right pr-[7px] text-[13px] text-[#333] font-['Liberation_Serif',serif]">1</b>
            <div class="w-[144px] h-[200px] mt-[4px] bg-white shadow-[1px_1px_2px_#555] pl-[9px] pt-[7px]">
              <svg class="w-[128px] h-[80px]" viewBox="0 0 128 80">
                <rect x="0" y="5" width="36" height="32" fill="#f0f8fd"/><rect x="41" y="2" width="36" height="18" fill="#f4f8fb"/><rect x="83" y="5" width="37" height="30" fill="#f0f8fd"/>
                <path d="M3 9h30M3 13h24M3 17h30M3 21h20M3 25h30M3 29h26M44 6h30M44 10h22M44 14h30M86 9h30M86 13h20M86 17h30M86 21h24M86 25h30M86 29h18" stroke="#c6d4de" stroke-width=".7"/>
                <rect x="0" y="38" width="3" height="3" fill="#2e74a0"/>
                <rect x="41" y="24" width="36" height="2" fill="#2e74a0"/><path d="M41 29h36M41 32h30" stroke="#c6d4de" stroke-width=".7"/><rect x="41" y="36" width="36" height="2" fill="#2e74a0"/><path d="M41 41h36" stroke="#c6d4de" stroke-width=".7"/>
                <rect x="0" y="47" width="36" height="11" fill="#f0f8fd"/><path d="M3 50h20M3 53h28" stroke="#c6d4de" stroke-width=".7"/><rect x="0" y="60" width="36" height="2" fill="#2e74a0"/><rect x="0" y="66" width="36" height="2" fill="#2e74a0"/>
                <rect x="40" y="46" width="36" height="26" fill="#f0f8fd"/><rect x="40" y="52" width="36" height="2" fill="#2e74a0"/><rect x="40" y="62" width="36" height="2" fill="#2e74a0"/><path d="M42 57h30M42 67h30" stroke="#c6d4de" stroke-width=".7"/>
                <rect x="79" y="42" width="48" height="36" fill="#f4f8f6"/><path d="M81 46h44M81 48.500h44M81 51h44M81 53.500h44M81 56h44M81 58.500h44M81 61h44M81 63.500h44M81 66h44M81 68.500h44M81 71h44M81 73.500h44" stroke="#b7d3e2" stroke-width="1.200"/>
              </svg>
            </div>
          </div>
        </div>
      </div>
      <!-- splitter -->
      <div class="w-[5px] border-l border-[#bdbcab]"></div>

      <!-- document area -->
      <div class="w-[1076px] flex flex-col bg-[#f0f0f0]">
        <div class="h-[843px] flex">
          <div class="w-[1059px] flex flex-col pt-[4px]">
            <div class="h-[16px] flex">
              <svg class="w-[21px] h-[16px] shrink-0" viewBox="0 0 21 16"><path d="M6 7h12M11 1v13" stroke="#222"/></svg>
              <div class="flex-1 relative" id="hruler"></div>
            </div>
            <div class="h-[5px]"></div>
            <div class="flex-1 flex">
              <div class="ml-[4px] w-[16px] relative" id="vruler"></div>
              <div class="ml-[5px] flex-1 bg-white relative overflow-hidden text-[8px] font-['Open_Sans',sans-serif] text-[#777]">
                <div class="absolute left-[186px] top-0 bottom-0 w-[3px] bg-[linear-gradient(90deg,#aaa,#ddd)]"></div>
                <div class="absolute left-[254px] top-0 bottom-0 w-px bg-[#aaa]"></div>

                <!-- pasted card 1 -->
                <div class="absolute left-[259px] top-0 w-[385px] h-[255px] shadow-[1px_1px_2px_rgba(0,0,0,0.2)] border-b-[5px] border-[#f2f2f2] pl-[12px] blur-[0.3px]">
                  <div class="w-[360px] h-[89px] bg-[#f0f9fe] pl-[8px] pt-[1px] leading-[15px]">
                    <b class="block text-[#2e74a0]">Název zakázky</b><p class="h-[13px]">Nákup potravin pro jídelnu</p><b class="block text-[#2e74a0]">Předmět</b><p class="h-[12px]">Žádám o zařazení</p><b class="block text-[#2e74a0]">Text zprávy</b>
                    <p class="text-right pr-[17px] pt-[0px]"><b>Odesláno</b> 29.11.2013 11:21:32 <b>Přečteno</b> 29.11.2013 11:24:08</p>
                  </div>
                  <b class="block pl-[27px] pt-[6px] leading-[10px]">Obsah nabídky</b>
                  <p class="text-[10px] leading-[12px] text-[#2e74a0]">Přílohy</p>
                  <div class="mt-[4px] w-[360px] h-[49px] bg-[#f0f9fe] px-[8px] pt-[10px]">
                    <div class="h-[17px] bg-[#2e74a0] text-white/80 grid grid-cols-[119px_140px_1fr] items-center pl-[5px]"><span>název</span><span>velikost</span><span>typ</span></div>
                    <p class="h-[15px] pl-[5px] bg-[#edf5fc] leading-[16px]">žádné přílohy</p>
                  </div>
                  <div class="mt-[9px] w-[360px] h-[34px] bg-[#f0f9fe] px-[8px] pt-[9px]">
                    <div class="h-[17px] bg-[#2e74a0] text-white/80 grid grid-cols-[78px_118px_72px_1fr] items-center pl-[5px]"><span>kriterium</span><span>cenová položka</span><span>hodnota</span><span>jednotka</span></div>
                  </div>
                  <div class="mt-[10px] w-[75px] h-[15px] bg-[#f4f4f4] border border-[#e4e4e4] flex items-center justify-center font-bold text-[6px] text-[#2e74a0]">ZPĚT</div>
                </div>

                <!-- pasted card 2 -->
                <div class="absolute left-[656px] top-0 w-[1px] h-[270px] bg-[#f2f2f2]"></div>
                <div class="absolute left-[668px] top-0 w-[359px] h-[265px] bg-[#f0f9fe] blur-[0.3px]">
                  <div class="h-[10px] bg-[#e5f0f6] flex text-[#2e74a0] font-semibold"><span class="w-[18px] h-[11px] bg-[#2e74a0] flex items-center justify-center"><i class="w-[6px] h-[2px] bg-white"></i></span><span class="pl-[9px] leading-[10px]">HODNOCENÍ</span></div>
                  <div class="pl-[8px] pr-[7px] leading-[13px]">
                    <b class="block pt-[13px] text-[#2e74a0]">Základní hodnotící kritérium</b>
                    <b class="block">nejnižší nabídková cena</b>
                    <b class="block">nejsou přijímány varianty nabídky</b>
                    <b class="block pt-[4px] text-[#2e74a0]">Prokázání kvalifikace</b>
                    <div class="mt-[9px] grid grid-cols-[39px_163px_52px_65px_25px]">
                      <div class="col-span-5 grid grid-cols-subgrid h-[17px] items-center bg-[#2e74a0] text-white/80"><span class="pl-[5px]">pořadí</span><span>název uchazeče</span><span>IČ</span><span>hodnocení</span><span>akce</span></div>
                      <div class="col-span-5 grid grid-cols-subgrid h-[15px] items-center bg-[#edf5fc]"><span class="pl-[5px]">1.</span><span>ABC Chomutov spol.s r.o.</span><span>44566760</span><span>akceptováno</span><svg class="w-[10px] h-[10px] ml-[1px]"><use href="#mag"/></svg></div>
                      <div class="col-span-5 grid grid-cols-subgrid h-[15px] items-center bg-[#e6eff6]"><span class="pl-[5px]">2.</span><span>Technické služby Uničov, spol. s r.o.</span><span>25830261</span><span>akceptováno</span><svg class="w-[10px] h-[10px] ml-[1px]"><use href="#mag"/></svg></div>
                    </div>
                    <div class="mt-[6px] w-[100px] h-[15px] bg-[#f6f6f6] border border-[#e4e4e4] flex items-center justify-center font-bold text-[6px] text-[#2e74a0]">UZAVŘÍT HODNOCENÍ KOLA 0</div>
                    <b class="block pt-[11px] text-[#2e74a0]">Vyhodnocené nabídky (mimo aukce)</b>
                    <div class="mt-[6px] grid grid-cols-[41px_171px_55px_51px_26px]">
                      <div class="col-span-5 grid grid-cols-subgrid h-[17px] items-center bg-[#2e74a0] text-white/80"><span class="pl-[5px]">pořadí</span><span>název uchazeče</span><span>IČ</span><span>hodnocení</span><span>akce</span></div>
                      <div class="col-span-5 grid grid-cols-subgrid h-[15px] items-center bg-[#edf5fc]"><span class="pl-[5px]">1.</span><span>ABC Chomutov spol.s r.o.</span><span>44566760</span><span>100 %</span><svg class="w-[10px] h-[10px]"><use href="#mag"/></svg></div>
                      <div class="col-span-5 grid grid-cols-subgrid h-[15px] items-center bg-[#e6eff6]"><span class="pl-[5px]">2.</span><span>Technické služby Uničov, spol. s r.o.</span><span>25830261</span><span>1 %</span><svg class="w-[10px] h-[10px]"><use href="#mag"/></svg></div>
                    </div>
                    <div class="mt-[6px] w-[100px] h-[15px] bg-[#f6f6f6] border border-[#e4e4e4] flex items-center justify-center font-bold text-[6px] text-[#2e74a0]">UZAVŘÍT HODNOCENÍ KOLA 1</div>
                  </div>
                </div>
              </div>
            </div>
          </div>
          <!-- vertical scrollbar -->
          <div class="w-[17px] pt-[1px] flex flex-col bg-[#fafaf6]">
            <div class="h-[17px] bg-[#c5d5fb] border border-white rounded-[2px] flex items-center justify-center"><svg class="w-[10px] h-[10px] rotate-180"><use href="#chev"/></svg></div>
            <div class="h-[310px]"></div>
            <div class="h-[350px] bg-[#c5d5fb] border border-white rounded-[2px]"></div>
            <div class="flex-1"></div>
            <div class="h-[15px] bg-[#c5d5fb] border border-white rounded-[2px] flex items-center justify-center"><svg class="w-[10px] h-[10px]"><use href="#chev"/></svg></div>
          </div>
        </div>
        <!-- layer tabs + horizontal scrollbar -->
        <div class="h-[18px] bg-[#ece9d8] flex items-center text-[11.5px] border-b border-[#999]">
          <div class="ml-[1px] w-[65px] flex">
            <span class="w-[16px] h-[17px] border border-[#2a5a8a] rounded-[2px] bg-white text-[9px] flex items-center justify-center"><svg class="w-[10px] h-[10px]" viewBox="0 0 10 10"><path d="M0 0h2v10H0zM9 0v10L3 5z" fill="#111"/></svg></span>
            <span class="w-[16px] h-[17px] border border-[#2a5a8a] rounded-[2px] bg-white text-[9px] flex items-center justify-center"><svg class="w-[10px] h-[10px]" viewBox="0 0 10 10"><path d="M8 0v10L2 5z" fill="#111"/></svg></span>
            <span class="w-[16px] h-[17px] border border-[#2a5a8a] rounded-[2px] bg-white text-[9px] flex items-center justify-center"><svg class="w-[10px] h-[10px]" viewBox="0 0 10 10"><path d="M2 0v10l6-5z" fill="#111"/></svg></span>
            <span class="w-[16px] h-[17px] border border-[#2a5a8a] rounded-[2px] bg-white text-[9px] flex items-center justify-center"><svg class="w-[10px] h-[10px]" viewBox="0 0 10 10"><path d="M8 0h2v10H8zM1 0v10l6-5z" fill="#111"/></svg></span>
          </div>
          <svg class="ml-[3px] w-[8px] h-[17px] bg-[#ece9d8] rotate-y-180"><use href="#tabcut"/></svg>
          <b class="w-[59px] h-full bg-white pl-[2px] leading-[17px] text-[12px] whitespace-nowrap">Rozvržení</b>
          <svg class="w-[8px] h-[17px]"><use href="#tabcut"/></svg>
          <span class="w-[87px] pl-[2px] h-full leading-[17px]">Ovládací prvky</span>
          <svg class="w-[8px] h-[17px]"><use href="#tabcut"/></svg>
          <span class="w-[82px] pl-[2px] h-full leading-[17px]">Kótovací čáry</span>
          <svg class="w-[8px] h-[17px]"><use href="#tabcut"/></svg>
          <div class="ml-[23px] h-full flex-1 flex bg-[linear-gradient(#f7f5ee,#fff)]">
            <span class="w-[15px] h-full bg-[#c5d5fb] border border-white flex items-center justify-center"><svg class="w-[10px] h-[10px] rotate-90"><use href="#chev"/></svg></span>
            <div class="ml-[196px] w-[161px] h-full bg-[#c5d5fb] border-x border-white text-center text-[8px] leading-[17px] text-[#5a78b8]">||||</div>
            <div class="ml-[320px] w-[15px] h-full bg-[#c5d5fb] border border-white flex items-center justify-center"><svg class="w-[10px] h-[10px] -rotate-90"><use href="#chev"/></svg></div>
          </div>
        </div>
      </div>
    </div>

    <!-- drawing toolbar -->
    <div class="h-[30px] bg-[#efefef] border-b border-[#aaa] flex items-center">
      <i class="ml-[3px] w-[4px] h-[22px] border-l-2 border-dotted border-[#999]"></i>
      <span class="ml-[5px] w-[25px] h-[27px] border border-[#7f9db9] rounded-[3px] bg-white flex items-center justify-center"><svg class="w-[14px] h-[20px]"><use href="#cursor"/></svg></span>
      <span class="w-[8px] flex justify-center"><i class="w-px h-[18px] bg-[#ccc]"></i></span>
      <span class="w-[24px] flex justify-center"><svg class="w-[16px] h-[16px]" viewBox="0 0 16 16"><path d="M1 15L15 1" stroke="#333"/></svg></span>
      <span class="w-[25px] flex justify-center"><svg class="w-[14px] h-[10px]" viewBox="0 0 14 10"><path d="M0 5h10" stroke="#111" stroke-width="1.500"/><path d="M8 1l6 4-6 4z" fill="#111"/></svg></span>
      <span class="w-[25px] flex justify-center"><i class="w-[14px] h-[14px] bg-[#d6d6d6] border border-[#999]"></i></span>
      <span class="w-[25px] flex justify-center"><i class="w-[16px] h-[14px] rounded-full bg-[#d6d6d6] border border-[#999]"></i></span>
      <span class="w-[25px] text-center text-[22px] leading-[22px] font-bold font-['Liberation_Serif',serif]">T</span>
      <span class="w-[8px] flex justify-center"><i class="w-px h-[18px] bg-[#ccc]"></i></span>
      <span class="w-[22px] flex justify-center"><svg class="w-[16px] h-[18px]" viewBox="0 0 16 18"><path d="M2 2q2 14 6 13t6-10" fill="none" stroke="#35527c" stroke-width="2"/><path d="M9 12l5-9 2 1-5 9z" fill="#e8a83c"/></svg></span>
      <span class="w-[16px] flex justify-center"><svg class="w-[7px] h-[4px]"><use href="#arrdown"/></svg></span>
      <span class="w-[20px] flex justify-center"><svg class="w-[14px] h-[18px]" viewBox="0 0 14 18"><path d="M3 3h4v12h4" fill="none" stroke="#333"/><circle cx="3" cy="3" r="2" fill="#fff" stroke="#333"/><circle cx="11" cy="15" r="2" fill="#fff" stroke="#333"/></svg></span>
      <span class="w-[18px] flex justify-center"><svg class="w-[7px] h-[4px]"><use href="#arrdown"/></svg></span>
      <span class="w-[19px] flex justify-center"><svg class="w-[16px] h-[6px]" viewBox="0 0 16 6"><path d="M0 3h12" stroke="#888" stroke-width="1.500"/><path d="M11 0l5 3-5 3z" fill="#888"/></svg></span>
      <span class="w-[18px] flex justify-center"><svg class="w-[7px] h-[4px]"><use href="#arrdown"/></svg></span>
      <span class="w-[20px] flex justify-center"><svg class="w-[16px] h-[18px]" viewBox="0 0 16 18"><path d="M8 1l7 8-7 8-7-8z" fill="#d8d8d8" stroke="#9a9a9a"/></svg></span>
      <span class="w-[17px] flex justify-center"><svg class="w-[7px] h-[4px]"><use href="#arrdown"/></svg></span>
      <span class="w-[20px] flex justify-center"><svg class="w-[16px] h-[18px]"><use href="#smiley"/></svg></span>
      <span class="w-[17px] flex justify-center"><svg class="w-[7px] h-[4px]"><use href="#arrdown"/></svg></span>
      <span class="w-[20px] flex justify-center"><svg class="w-[16px] h-[12px]" viewBox="0 0 16 12"><path d="M1 6l4-5v3h6V1l4 5-4 5V8H5v3z" fill="#eee" stroke="#9a9a9a"/></svg></span>
      <span class="w-[17px] flex justify-center"><svg class="w-[7px] h-[4px]"><use href="#arrdown"/></svg></span>
      <span class="w-[20px] flex justify-center"><i class="w-[15px] h-[18px] bg-[#d6d6d6] border border-[#9a9a9a] rounded-[2px]"></i></span>
      <span class="w-[17px] flex justify-center"><svg class="w-[7px] h-[4px]"><use href="#arrdown"/></svg></span>
      <span class="w-[20px] flex justify-center"><svg class="w-[16px] h-[18px]"><use href="#callout"/></svg></span>
      <span class="w-[17px] flex justify-center"><svg class="w-[7px] h-[4px]"><use href="#arrdown"/></svg></span>
      <span class="w-[20px] flex justify-center"><svg class="w-[16px] h-[16px]"><use href="#star"/></svg></span>
      <span class="w-[16px] flex justify-center"><svg class="w-[7px] h-[4px]"><use href="#arrdown"/></svg></span>
      <span class="w-[8px] flex justify-center"><i class="w-px h-[18px] bg-[#ccc]"></i></span>
      <span class="w-[22px] flex justify-center"><svg class="w-[14px] h-[18px]" viewBox="0 0 14 18"><path d="M8 2l4 1-1 10-8 3-1-7z" fill="none" stroke="#333"/></svg></span>
      <span class="w-[28px] flex justify-center"><svg class="w-[14px] h-[20px]" viewBox="0 0 14 20"><path d="M9 2l4 3-7 10-4-1z" fill="#8a5a2a" stroke="#333" stroke-width=".6"/><path d="M2 14v5" stroke="#999"/></svg></span>
      <span class="w-[6px] flex justify-center"><i class="w-px h-[18px] bg-[#ccc]"></i></span>
      <span class="w-[26px] flex justify-center"><svg class="w-[14px] h-[16px]" viewBox="0 0 14 16"><path d="M7 0l3 4H4z" fill="#8a6a3a"/><rect x="1" y="4" width="12" height="11" fill="#eee" stroke="#333"/><text x="4" y="13" font-size="8" font-weight="700" fill="#333" font-family="Liberation Sans">A</text></svg></span>
      <span class="w-[25px] flex justify-center"><svg class="w-[16px] h-[18px]" viewBox="0 0 16 18"><rect x="1" y="3" width="14" height="12" fill="#fff" stroke="#bbb" stroke-dasharray="2 1"/><rect x="2" y="7" width="7" height="7" fill="#d9263a"/><path d="M9 5l5 9H5z" fill="#2c5fa8"/><circle cx="12" cy="3" r="2" fill="#f2c31f"/></svg></span>
      <span class="w-[24px] flex justify-center"><svg class="w-[16px] h-[16px]" viewBox="0 0 16 16"><rect x="1" y="1" width="10" height="10" fill="#eee" stroke="#555"/><rect x="5" y="5" width="10" height="10" fill="#c8a86c" stroke="#555"/></svg></span>
      <span class="w-[10px] flex justify-center"><i class="w-px h-[18px] bg-[#ccc]"></i></span>
      <span class="w-[24px] flex justify-center"><i class="w-[14px] h-[16px] bg-[#cfcfcf] border border-[#aaa] rounded-[2px]"></i></span>
    </div>

    <!-- status bar -->
    <div class="flex-1 bg-[#ece9d8] flex items-center text-[11.5px] text-[#333]">
      <div class="w-[460px]"></div>
      <div class="w-[221px] h-full border-l border-[#aca899] flex items-center pl-[9px]">
        <svg class="w-[13px] h-[13px] mr-[6px]" viewBox="0 0 13 13"><path d="M4 0v13M0 4h13" stroke="#2d4fd0"/><rect x="4" y="6" width="8" height="6" fill="none" stroke="#555" stroke-dasharray="1 1"/></svg>
        <span class="w-[89px]">-4,20 / 15,43</span>
        <svg class="w-[13px] h-[13px] mr-[6px]" viewBox="0 0 13 13"><rect x="1" y="3" width="11" height="9" fill="none" stroke="#555" stroke-dasharray="1 1"/><path d="M4 1h6" stroke="#555"/></svg>
        <span>0,00 x 0,00</span>
      </div>
      <div class="w-[22px] h-full border-l border-[#aca899] flex items-center pl-[7px]"><span class="w-[10px] h-[13px] border border-[#888] text-[#c00] text-[11px] leading-[12px] font-bold text-right">*</span></div>
      <div class="w-[29px] h-full border-l border-[#aca899]"></div>
      <div class="w-[128px] h-full border-l border-[#aca899] pl-[8px] leading-[22px]">Snímek 1 / 1</div>
      <div class="w-[231px] h-full border-l border-[#aca899] pl-[8px] leading-[22px]">Výchozí</div>
      <div class="w-[143px] h-full border-l border-[#aca899] flex items-center pl-[10px] gap-[7px] relative">
        <i class="w-[9px] h-[2px] bg-[#aca899]"></i><i class="w-[97px] h-[2px] bg-[#aca899]"></i>
        <i class="absolute left-[56px] top-[6px] w-px h-[11px] bg-[#aca899]"></i>
        <i class="absolute left-[71px] top-[7px] w-[7px] h-[8px] rounded-full bg-white border border-[#999]"></i>
        <span class="text-[#aca899] font-bold text-[15px] leading-[15px]">+</span>
      </div>
      <div class="flex-1 h-full border-l border-[#aca899] pl-[7px] leading-[22px]">180%</div>
    </div>
  </div>

  <script>
    // rulers: one centimetre is 68px on screen
    const NS = "http://www.w3.org/2000/svg";
    function rulerSvg(w, h) {
      const s = document.createElementNS(NS, "svg");
      s.setAttribute("width", w); s.setAttribute("height", h);
      s.style.position = "absolute"; s.style.left = 0; s.style.top = 0;
      return s;
    }
    function add(s, tag, attrs, text) {
      const e = document.createElementNS(NS, tag);
      for (const k in attrs) e.setAttribute(k, attrs[k]);
      if (text !== undefined) e.textContent = text;
      s.appendChild(e);
    }
    const textAttrs = { "font-size": 13, "font-family": "Liberation Sans", fill: "#666", "text-anchor": "middle" };

    // top ruler, origin at x = 1763
    const hr = rulerSvg(1038, 16), originX = 258;
    add(hr, "rect", { x: 0, y: 0, width: originX, height: 16, fill: "#efefef" });
    add(hr, "rect", { x: originX, y: 0, width: 780, height: 16, fill: "#fff" });
    add(hr, "path", { d: `M${originX} 0v16`, stroke: "#999" });
    for (let i = -4; i < 12; i++) {
      const x = originX + i * 68;
      if (i !== 0 && x > 0) add(hr, "text", { ...textAttrs, x, y: 13 }, Math.abs(i));
      add(hr, "rect", { x: x + 17, y: 8, width: 1, height: 1, fill: "#888" });
      add(hr, "rect", { x: x + 34, y: 6, width: 1, height: 4, fill: "#888" });
      add(hr, "rect", { x: x + 51, y: 8, width: 1, height: 1, fill: "#888" });
    }
    document.getElementById("hruler").appendChild(hr);

    // left ruler, 7 sits at y = 149
    const vr = rulerSvg(16, 820);
    for (let n = 7; n < 20; n++) {
      const y = 12 + (n - 7) * 68;
      add(vr, "text", { ...textAttrs, x: 0, y: 0, transform: `translate(13 ${y}) rotate(-90)` }, n);
      add(vr, "rect", { x: 8, y: y + 17, width: 1, height: 1, fill: "#888" });
      add(vr, "rect", { x: 6, y: y + 34, width: 4, height: 1, fill: "#888" });
      add(vr, "rect", { x: 8, y: y + 51, width: 1, height: 1, fill: "#888" });
    }
    document.getElementById("vruler").appendChild(vr);
  </script>
</body>
</html>
